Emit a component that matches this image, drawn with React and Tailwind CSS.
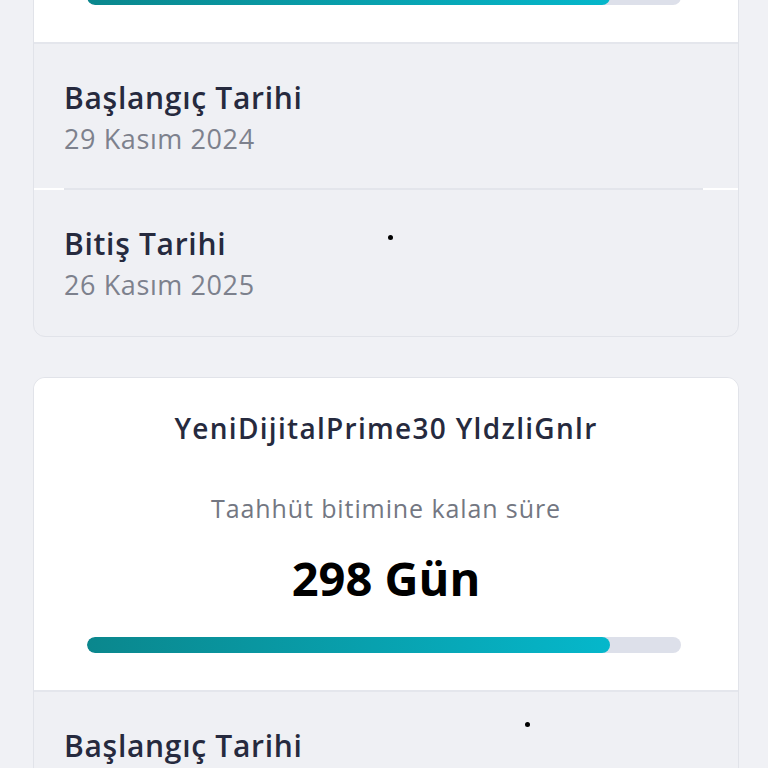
import React from "react";

const cards = [
  { title: "YeniDijitalPrime30 YldzliGnlr", days: 298, pct: 88, start: "29 Kasım 2024", end: "26 Kasım 2025" },
  { title: "YeniDijitalPrime30 YldzliGnlr", days: 298, pct: 88, start: "29 Kasım 2024", end: "26 Kasım 2025" },
];

function DateRow({ label, value, divider }) {
  return (
    <div className="relative px-[30px] pt-[36px] h-[146px]">
      <p className="text-[30px] leading-[36px] font-semibold tracking-[0.7px] text-[#262a3e]">{label}</p>
      <p className="text-[27px] leading-[36px] mt-[5px] tracking-[0.6px] text-[#7d818d]">{value}</p>
      {divider && (
        <div className="absolute bottom-0 left-0 right-0 flex h-[2px]">
          <div className="w-[30px] bg-white" />
          <div className="flex-1 bg-[#e3e5eb]" />
          <div className="w-[35px] bg-white" />
        </div>
      )}
    </div>
  );
}

function Card({ card }) {
  return (
    <div className="rounded-[12px] border border-[#e1e3e9] overflow-hidden bg-[#eff0f4]">
      <div className="bg-white pt-[30px] pb-[37px] flex flex-col items-center border-b-2 border-[#e4e6ec]">
        <h2 className="text-[28px] leading-[40px] font-semibold tracking-[1.3px] text-[#262a3e]">{card.title}</h2>
        <p className="mt-[42px] text-[25px] leading-[36px] tracking-[0.9px] text-[#737782]">Taahhüt bitimine kalan süre</p>
        <p className="mt-[25px] text-[47px] leading-[54px] font-bold text-black">
          {card.days} Gün
        </p>
        <div className="mt-[32px] self-stretch ml-[53px] mr-[57px] h-[16px] rounded-full bg-[#dde0ea] overflow-hidden">
          <div
            className="h-full rounded-full bg-gradient-to-r from-[#0a878d] to-[#05b7cb]"
            style={{ width: `${card.pct}%` }}
          />
        </div>
      </div>
      <DateRow label="Başlangıç Tarihi" value={card.start} divider />
      <DateRow label="Bitiş Tarihi" value={card.end} />
    </div>
  );
}

export default function App() {
  return (
    <div className="relative min-h-[768px] h-[768px] overflow-hidden bg-[#f0f1f5] font-['Open_Sans',sans-serif]">
      <div className="mt-[-271px] pl-[33px] pr-[29px] flex flex-col gap-[40px]">
        {cards.map((c, i) => (
          <Card key={i} card={c} />
        ))}
      </div>
      <span className="absolute left-[388px] top-[235px] w-[5px] h-[5px] rounded-full bg-black" />
      <span className="absolute left-[525px] top-[722px] w-[5px] h-[5px] rounded-full bg-black" />
    </div>
  );
}
